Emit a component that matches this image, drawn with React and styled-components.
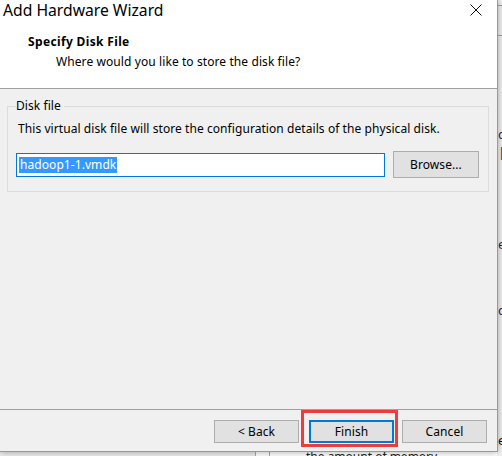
import React from "react";
import styled, { createGlobalStyle } from "styled-components";

const GlobalStyle = createGlobalStyle`
  html, body { margin: 0; padding: 0; }
  body {
    width: 502px;
    height: 456px;
    overflow: hidden;
    font-family: "Noto Sans", "Liberation Sans", sans-serif;
    font-size: 12px;
    color: #000;
  }
`;

const UI_FONT = `"Noto Sans", "Liberation Sans", sans-serif`;

const Desktop = styled.div`
  position: relative;
  width: 502px;
  height: 456px;
  overflow: hidden;
  background: #ffffff;
`;

/* ---------- background application, partly hidden behind the dialog ---------- */
const BackApp = styled.div`
  display: grid;
  grid-template-columns: 497px 1fr;
  height: 456px;
`;

const BackLeft = styled.div`
  display: flex;
  flex-direction: column;
  justify-content: flex-end;
`;

const BackTable = styled.div`
  display: grid;
  grid-template-columns: 255px 15px 1fr;
  height: 6px;
`;

const BackCell = styled.div`
  background: ${(p) => p.$bg || "#fff"};
  border-left: ${(p) => (p.$line ? "1px solid #a8a8a8" : "none")};
  border-right: ${(p) => (p.$lineRight ? "1px solid #a8a8a8" : "none")};
  overflow: hidden;
  font-family: ${UI_FONT};
  font-size: 12px;
  line-height: 13px;
  color: #222;
  white-space: nowrap;
  padding-left: ${(p) => p.$pad || 0}px;
`;

const BackRight = styled.div`
  display: flex;
  flex-direction: column;
  background: #f2f2f2;
  overflow: hidden;
`;

const BackLine = styled.div`
  height: ${(p) => p.$h}px;
  flex: none;
  font-family: ${UI_FONT};
  font-size: 13px;
  line-height: ${(p) => p.$h}px;
  color: ${(p) => p.$color || "#1a2a6c"};
  white-space: nowrap;
  padding-left: 1px;
  border-top: ${(p) => (p.$rule ? "1px solid #a0a0a0" : "none")};
`;

/* ---------- the dialog window ---------- */
const Window = styled.div`
  position: absolute;
  left: 0;
  top: 0;
  width: 497px;
  height: 451px;
  display: flex;
  flex-direction: column;
  background: #f0f0f0;
  border-right: 1px solid #6cb774;
  border-bottom: 1px solid #6cb774;
  box-shadow: 0 0 7px rgba(0, 0, 0, 0.35);
  letter-spacing: 0.07px;
`;

const TitleBar = styled.div`
  height: 24px;
  flex: none;
  display: flex;
  align-items: flex-start;
  justify-content: space-between;
  background: #fff;
`;

const TitleText = styled.div`
  font-family: ${UI_FONT};
  font-size: 15.7px;
  line-height: 20px;
  margin-left: 3px;
  color: #000;
  letter-spacing: 0;
`;

const CloseButton = styled.div`
  width: 12px;
  height: 12px;
  margin: 4px 15px 0 0;
  display: flex;
`;

const Header = styled.div`
  height: 65px;
  flex: none;
  background: #fff;
  border-bottom: 1px solid #a0a0a0;
  display: flex;
  flex-direction: column;
  padding-top: 10px;
  box-sizing: border-box;
`;

const HeaderTitle = styled.div`
  font-weight: 700;
  font-size: 12px;
  line-height: 16px;
  margin-left: 28px;
  letter-spacing: 0.35px;
`;

const HeaderSub = styled.div`
  font-size: 12px;
  line-height: 16px;
  margin-left: 56px;
  margin-top: 4px;
  letter-spacing: 0.09px;
`;

const Body = styled.div`
  flex: 1;
  padding-top: 9px;
`;

const Group = styled.fieldset`
  margin: 0 0 0 7px;
  width: 482px;
  box-sizing: border-box;
  border: 1px solid #dcdcdc;
  padding: 0 8px 13px 8px;
`;

const Legend = styled.legend`
  padding: 0 3px 0 0;
  margin-left: 0;
  font-size: 12px;
  line-height: 16px;
`;

const Description = styled.div`
  margin: 7px 0 0 2px;
  font-size: 12px;
  line-height: 16px;
`;

const FileRow = styled.div`
  display: flex;
  align-items: center;
  gap: 8px;
  margin-top: 14px;
`;

const TextBox = styled.div`
  width: 369px;
  height: 24px;
  box-sizing: border-box;
  background: #fff;
  border: 1px solid #0078d7;
  display: flex;
  align-items: center;
  padding-left: 2px;
`;

const Selected = styled.span`
  background: #3399ff;
  color: #fff;
  font-size: 12px;
  line-height: 16px;
  padding: 0 1px;
`;

const Button = styled.div`
  width: ${(p) => p.$w || 85}px;
  height: ${(p) => p.$h || 23}px;
  box-sizing: border-box;
  background: #e1e1e1;
  border: ${(p) => (p.$default ? "2px solid #0078d7" : "1px solid #adadad")};
  display: flex;
  align-items: center;
  justify-content: center;
  font-size: 12px;
  color: #000;
  flex: none;
`;

const Footer = styled.div`
  height: 42px;
  flex: none;
  box-sizing: border-box;
  border-top: 1px solid #a0a0a0;
  display: flex;
  justify-content: flex-end;
  align-items: flex-start;
  padding: 10px 10px 0 0;
`;

const FooterButtons = styled.div`
  display: flex;
  gap: 10px;
`;

const Highlight = styled.div`
  position: relative;
  margin-right: -2px;
  &::after {
    content: "";
    position: absolute;
    left: -8px;
    top: -10px;
    right: -4px;
    bottom: -4px;
    border: 3px solid #ee3b3b;
    pointer-events: none;
  }
`;

export default function App() {
  return (
    <>
      <GlobalStyle />
      <Desktop>
        <BackApp>
          <BackLeft>
            <BackTable>
              <BackCell $bg="#ececec" />
              <BackCell $line $lineRight />
              <BackCell $pad={36}>the amount of memory.</BackCell>
            </BackTable>
          </BackLeft>
          <BackRight>
            <BackLine $h={5} />
            <BackLine $h={29} $rule />
            <BackLine $h={89} $rule />
            <BackLine $h={18}>co</BackLine>
            <BackLine $h={18} $color="#5a1a10">|p</BackLine>
            <BackLine $h={74} />
            <BackLine $h={18}>ec</BackLine>
            <BackLine $h={48} />
            <BackLine $h={18}>co</BackLine>
            <BackLine $h={112} />
            <BackLine $h={18} $color="#111">e</BackLine>
          </BackRight>
        </BackApp>

        <Window>
          <TitleBar>
            <TitleText>Add Hardware Wizard</TitleText>
            <CloseButton>
              <svg width="12" height="12" viewBox="0 0 12 12">
                <path d="M0.5 0.5 L11.5 11.5 M11.5 0.5 L0.5 11.5" stroke="#111" strokeWidth="1" />
              </svg>
            </CloseButton>
          </TitleBar>
          <Header>
            <HeaderTitle>Specify Disk File</HeaderTitle>
            <HeaderSub>Where would you like to store the disk file?</HeaderSub>
          </Header>
          <Body>
            <Group>
              <Legend>Disk file</Legend>
              <Description>
                This virtual disk file will store the configuration details of the physical disk.
              </Description>
              <FileRow>
                <TextBox>
                  <Selected>hadoop1-1.vmdk</Selected>
                </TextBox>
                <Button $w={86} $h={27}>Browse...</Button>
              </FileRow>
            </Group>
          </Body>
          <Footer>
            <FooterButtons>
              <Button>&lt; Back</Button>
              <Highlight>
                <Button $default>Finish</Button>
              </Highlight>
              <Button>Cancel</Button>
            </FooterButtons>
          </Footer>
        </Window>
      </Desktop>
    </>
  );
}
